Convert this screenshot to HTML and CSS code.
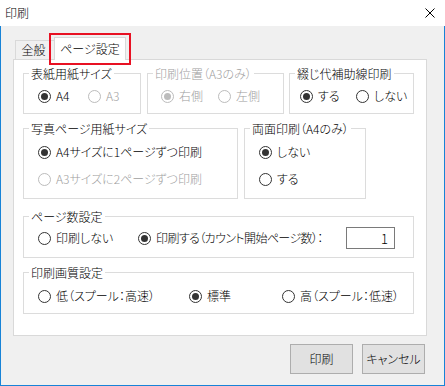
FILE: index.html
```html
<!DOCTYPE html>
<html lang="ja">
<head>
<meta charset="utf-8">
<title>印刷</title>
<link rel="stylesheet" href="styles.css">
</head>
<body>
<div class="window">
  <div class="titlebar">
    <span class="title">印刷</span>
    <svg class="close" viewBox="0 0 10 10" width="10" height="10"><path d="M0.5 0.5 L9.5 9.5 M9.5 0.5 L0.5 9.5" stroke="#000" stroke-width="1" fill="none"/></svg>
  </div>
  <div class="body">
    <div class="tabs">
      <div class="tab">全般</div>
      <div class="tab active">ページ設定</div>
      <div class="highlight"></div>
    </div>
    <div class="panel">
      <div class="row r1">
        <fieldset class="w118">
          <legend>表紙用紙サイズ</legend>
          <div class="opts p14 pt6">
            <div class="opt ow50"><span class="radio on"></span>A4</div>
            <div class="opt dis"><span class="radio"></span>A3</div>
          </div>
        </fieldset>
        <fieldset class="w137 ml6 disgroup">
          <legend>印刷位置（A3のみ）</legend>
          <div class="opts p13 pt6">
            <div class="opt ow57 dis"><span class="radio on"></span>右側</div>
            <div class="opt dis"><span class="radio"></span>左側</div>
          </div>
        </fieldset>
        <fieldset class="w125 ml5">
          <legend>綴じ代補助線印刷</legend>
          <div class="opts p10 pt6">
            <div class="opt ow56"><span class="radio on"></span>する</div>
            <div class="opt"><span class="radio"></span>しない</div>
          </div>
        </fieldset>
      </div>
      <div class="row r2">
        <fieldset class="w215">
          <legend>写真ページ用紙サイズ</legend>
          <div class="opts col p14 pt7">
            <div class="opt"><span class="radio on"></span>A4サイズに1ページずつ印刷</div>
            <div class="opt dis"><span class="radio"></span>A3サイズに2ページずつ印刷</div>
          </div>
        </fieldset>
        <fieldset class="w122 ml6">
          <legend>両面印刷（A4のみ）</legend>
          <div class="opts col p14 pt7">
            <div class="opt"><span class="radio on"></span>しない</div>
            <div class="opt"><span class="radio"></span>する</div>
          </div>
        </fieldset>
      </div>
      <div class="row r3">
        <fieldset class="w391">
          <legend>ページ数設定</legend>
          <div class="opts p14 pt2 tall">
            <div class="opt ow100"><span class="radio"></span>印刷しない</div>
            <div class="opt"><span class="radio on"></span><span class="tight">印刷する（カウント開始ページ数）：</span></div>
            <input class="num" type="text" value="1">
          </div>
        </fieldset>
      </div>
      <div class="row r4">
        <fieldset class="w391">
          <legend>印刷画質設定</legend>
          <div class="opts p14 pt7">
            <div class="opt ow151"><span class="radio"></span>低（スプール：高速）</div>
            <div class="opt ow93"><span class="radio on"></span>標準</div>
            <div class="opt"><span class="radio"></span>高（スプール：低速）</div>
          </div>
        </fieldset>
      </div>
    </div>
    <div class="buttons">
      <div class="btn">印刷</div>
      <div class="btn">キャンセル</div>
    </div>
  </div>
</div>
</body>
</html>
```

FILE: styles.css
```css
* { box-sizing: border-box; }
html, body { margin: 0; padding: 0; }
body {
  width: 445px;
  height: 386px;
  overflow: hidden;
  background: #fff;
  color: #000;
  font-family: "Noto Sans CJK JP", "Noto Sans", sans-serif;
  font-size: 12px;
  font-weight: 300;
  line-height: 16px;
  font-feature-settings: "palt";
}
.window {
  width: 445px;
  height: 386px;
  display: flex;
  flex-direction: column;
}
.titlebar {
  height: 26px;
  flex: none;
  background: #fff;
  display: flex;
  align-items: center;
  justify-content: space-between;
  padding: 0 10px 0 5px;
}
.close { display: block; }
.body {
  flex: 1;
  background: #f0f0f0;
  border: 1px solid #1883d7;
  border-top: none;
  display: flex;
  flex-direction: column;
}
.tabs {
  position: relative;
  height: 34px;
  flex: none;
  display: flex;
  align-items: flex-end;
  padding-left: 14px;
}
.tab {
  width: 40px;
  height: 19px;
  margin-bottom: 1px;
  padding-right: 3px;
  border: 1px solid #d9d9d9;
  border-bottom: none;
  display: flex;
  align-items: center;
  justify-content: center;
}
.tab.active {
  position: relative;
  z-index: 1;
  width: 72px;
  height: 23px;
  margin-bottom: 0;
  margin-left: -1px;
  padding-right: 0;
  padding-bottom: 1px;
  background: #fff;
}
.highlight {
  position: absolute;
  left: 48px;
  top: 7px;
  width: 82px;
  height: 32px;
  border: 2px solid #e81123;
  z-index: 2;
}
.panel {
  margin: -1px 17px 0 12px;
  height: 277px;
  flex: none;
  background: #fff;
  border: 1px solid #d9d9d9;
  padding: 5px 12px 0 9px;
  display: flex;
  flex-direction: column;
}
.row { display: flex; }
.r1 { height: 49px; }
.r2 { height: 79px; margin-top: 6px; }
.r3 { height: 50px; margin-top: 9px; }
.r4 { height: 50px; margin-top: 6px; }
fieldset {
  margin: 0;
  padding: 0;
  min-width: 0;
  height: 100%;
  border: 1px solid #dcdcdc;
}
legend {
  margin-left: 5px;
  padding: 0 2px;
  line-height: 17px;
}
.disgroup legend { color: #a0a0a0; }
.w118 { width: 118px; }
.w137 { width: 137px; }
.w125 { width: 125px; }
.w215 { width: 215px; }
.w122 { width: 122px; }
.w391 { width: 391px; }
.ml6 { margin-left: 6px; }
.ml5 { margin-left: 5px; }
.opts { display: flex; align-items: center; }
.opts.col { flex-direction: column; align-items: flex-start; gap: 11px; }
.opts.tall { height: 24px; padding-right: 18px; }
.p14 { padding-left: 14px; }
.p13 { padding-left: 13px; }
.p10 { padding-left: 10px; }
.pt6 { padding-top: 6px; }
.pt7 { padding-top: 7px; }
.pt2 { padding-top: 2px; }
.opt {
  display: flex;
  align-items: center;
  height: 16px;
  white-space: nowrap;
  flex: none;
}
.tight { letter-spacing: -0.6px; }
.ow50 { width: 50px; }
.ow57 { width: 57px; }
.ow56 { width: 56px; }
.ow100 { width: 100px; }
.ow151 { width: 151px; }
.ow93 { width: 93px; }
.radio {
  width: 13px;
  height: 13px;
  flex: none;
  margin-right: 5px;
  border: 1px solid #333;
  border-radius: 50%;
  background: #fff;
  display: flex;
  align-items: center;
  justify-content: center;
}
.radio.on::after {
  content: "";
  width: 7px;
  height: 7px;
  border-radius: 50%;
  background: #333;
}
.dis { color: #a0a0a0; }
.dis .radio { border-color: #bcbcbc; }
.dis .radio.on::after { background: #bcbcbc; }
.num {
  margin: 0 0 0 auto;
  width: 49px;
  height: 22px;
  border: 1px solid #7a7a7a;
  background: #fff;
  padding: 0 6px 0 0;
  font-family: "Noto Sans CJK JP", "Noto Sans", sans-serif;
  font-size: 13px;
  font-weight: 300;
  text-align: right;
  color: #000;
  outline: none;
}
.buttons {
  display: flex;
  justify-content: flex-end;
  gap: 9px;
  margin-top: 8px;
  padding-right: 19px;
}
.btn {
  width: 63px;
  height: 30px;
  background: #e1e1e1;
  border: 1px solid #adadad;
  display: flex;
  align-items: center;
  justify-content: center;
}
```
